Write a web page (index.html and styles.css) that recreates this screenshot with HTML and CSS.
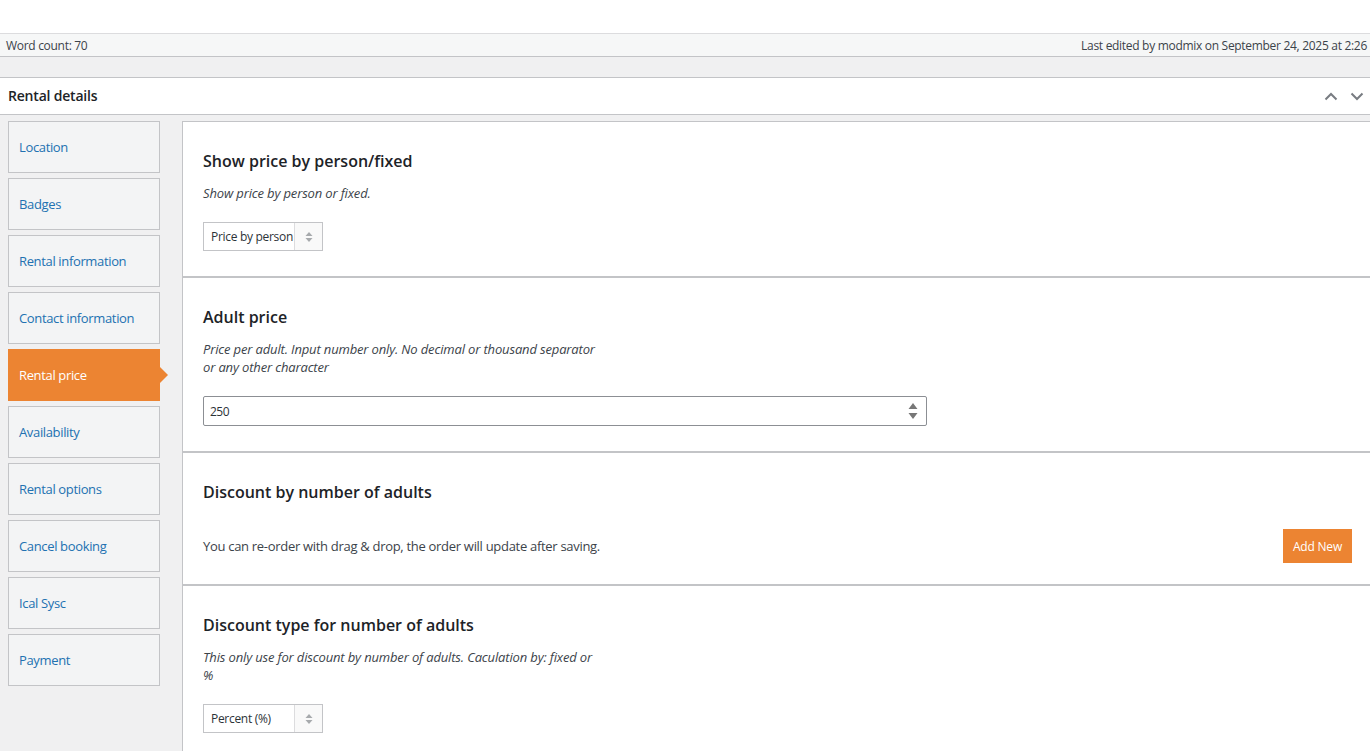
FILE: index.html
```html
<!DOCTYPE html>
<html lang="en">
<head>
    <meta charset="UTF-8">
    <meta name="viewport" content="width=device-width, initial-scale=1.0">
    <title>Rental details</title>
    <link rel="stylesheet" href="styles.css">
</head>
<body>
    <div class="editor-top"></div>
    <div class="status-bar">
        <span>Word count: 70</span>
        <span>Last edited by modmix on September 24, 2025 at 2:26</span>
    </div>
    <div class="spacer"></div>

    <div class="postbox">
        <div class="postbox-header">
            <h2>Rental details</h2>
            <div class="handle-actions">
                <svg width="14" height="9" viewBox="0 0 14 9"><path d="M1.5 7.5 L7 2 L12.5 7.5" fill="none" stroke="#787c82" stroke-width="2"/></svg>
                <svg width="14" height="9" viewBox="0 0 14 9"><path d="M1.5 1.5 L7 7 L12.5 1.5" fill="none" stroke="#787c82" stroke-width="2"/></svg>
            </div>
        </div>
        <div class="postbox-body">
            <ul class="tabs">
                <li class="tab">Location</li>
                <li class="tab">Badges</li>
                <li class="tab">Rental information</li>
                <li class="tab">Contact information</li>
                <li class="tab active">Rental price</li>
                <li class="tab">Availability</li>
                <li class="tab">Rental options</li>
                <li class="tab">Cancel booking</li>
                <li class="tab">Ical Sysc</li>
                <li class="tab">Payment</li>
            </ul>

            <div class="panel">
                <div class="field">
                    <h3>Show price by person/fixed</h3>
                    <p class="desc">Show price by person or fixed.</p>
                    <div class="select-box">
                        <select>
                            <option>Price by person</option>
                            <option>Fixed</option>
                        </select>
                        <span class="select-arrow">
                            <svg width="8" height="12" viewBox="0 0 8 12"><path d="M4 1 L7.5 5 H0.5 Z M4 11 L7.5 7 H0.5 Z" fill="#a7aaad"/></svg>
                        </span>
                    </div>
                </div>

                <div class="field">
                    <h3>Adult price</h3>
                    <p class="desc">Price per adult. Input number only. No decimal or thousand separator or any other character</p>
                    <div class="num-field">
                        <input type="text" value="250">
                        <svg width="10" height="18" viewBox="0 0 10 18"><path d="M5 1 L9.5 7 H0.5 Z M5 17 L9.5 11 H0.5 Z" fill="#777"/></svg>
                    </div>
                </div>

                <div class="field field-repeater">
                    <h3>Discount by number of adults</h3>
                    <div class="repeater-row">
                        <span>You can re-order with drag &amp; drop, the order will update after saving.</span>
                        <button class="btn-add">Add New</button>
                    </div>
                </div>

                <div class="field">
                    <h3>Discount type for number of adults</h3>
                    <p class="desc">This only use for discount by number of adults. Caculation by: fixed or %</p>
                    <div class="select-box">
                        <select>
                            <option>Percent (%)</option>
                            <option>Fixed</option>
                        </select>
                        <span class="select-arrow">
                            <svg width="8" height="12" viewBox="0 0 8 12"><path d="M4 1 L7.5 5 H0.5 Z M4 11 L7.5 7 H0.5 Z" fill="#a7aaad"/></svg>
                        </span>
                    </div>
                </div>
            </div>
        </div>
    </div>
</body>
</html>
```

FILE: styles.css
```css
body {
    font-family: "Open Sans", "Noto Sans", Arial, sans-serif;
    color: #3c434a;
    background-color: #f0f0f1;
    margin: 0;
    height: 751px;
    overflow: hidden;
}
.editor-top {
    height: 33px;
    background-color: #fff;
    border-bottom: 1px solid #dcdcde;
}
.status-bar {
    height: 22px;
    background-color: #f6f7f7;
    border-bottom: 1px solid #c3c4c7;
    display: flex;
    align-items: center;
    justify-content: space-between;
    padding: 0 3px 0 6px;
    font-size: 12px;
    letter-spacing: -0.3px;
    color: #3c434a;
    white-space: nowrap;
}
.spacer {
    height: 20px;
    background-color: #f0f0f1;
    border-bottom: 1px solid #c3c4c7;
}
.postbox-header {
    height: 36px;
    background-color: #fff;
    border-bottom: 1px solid #c3c4c7;
    display: flex;
    align-items: center;
    justify-content: space-between;
    padding: 0 6px 0 8px;
}
.postbox-header h2 {
    margin: 0 0 2px;
    font-size: 14px;
    font-weight: 600;
    letter-spacing: -0.2px;
    color: #1d2327;
}
.handle-actions {
    display: flex;
    gap: 12px;
    align-items: center;
}
.postbox-body {
    display: flex;
    align-items: flex-start;
    padding-top: 6px;
    background-color: #f0f0f1;
}
.tabs {
    list-style: none;
    margin: 0;
    padding: 0 0 0 8px;
    width: 152px;
    margin-right: 22px;
    display: flex;
    flex-direction: column;
    gap: 5px;
}
.tab {
    height: 50px;
    display: flex;
    align-items: center;
    padding-left: 10px;
    background-color: #f3f4f5;
    border: 1px solid #c3c4c7;
    font-size: 13px;
    letter-spacing: -0.35px;
    color: #2271b1;
    position: relative;
}
.tab.active {
    background-color: #ec8432;
    border-color: #ec8432;
    color: #fff;
}
/* стрелка у активной вкладки */
.tab.active::after {
    content: "";
    position: absolute;
    right: -9px;
    top: 17px;
    border-left: 8px solid #ec8432;
    border-top: 8px solid transparent;
    border-bottom: 8px solid transparent;
}
.panel {
    flex: 1;
    background-color: #fff;
    border-left: 1px solid #c3c4c7;
    border-top: 1px solid #c3c4c7;
    height: 640px;
}
.field {
    padding: 28px 18px 25px 20px;
    border-bottom: 2px solid #c3c4c7;
}
.field-repeater {
    padding-bottom: 21px;
}
.field h3 {
    margin: 0;
    font-size: 16px;
    line-height: 22px;
    font-weight: 600;
    color: #1d2327;
}
.desc {
    margin: 12px 0 20px;
    max-width: 392px;
    font-size: 13px;
    line-height: 18px;
    font-style: italic;
    letter-spacing: -0.15px;
    color: #3c434a;
}
.select-box {
    display: flex;
    width: 118px;
    height: 27px;
    border: 1px solid #c3c4c7;
}
.select-box select {
    flex: 1;
    min-width: 0;
    appearance: none;
    border: none;
    background: #fff;
    font-family: inherit;
    font-size: 12px;
    letter-spacing: -0.3px;
    color: #2c3338;
    padding: 0 0 0 7px;
    outline: none;
}
.select-arrow {
    width: 27px;
    border-left: 1px solid #dcdcde;
    background-color: #f9f9f9;
    display: flex;
    align-items: center;
    justify-content: center;
}
.num-field {
    width: 724px;
    height: 30px;
    margin-top: 1px;
    box-sizing: border-box;
    border: 1px solid #8c8f94;
    border-radius: 2px;
    display: flex;
    align-items: center;
    padding-right: 8px;
}
.num-field input {
    flex: 1;
    border: none;
    outline: none;
    font-family: inherit;
    font-size: 12px;
    letter-spacing: -0.5px;
    color: #2c3338;
    padding: 0 6px;
}
.repeater-row {
    display: flex;
    align-items: center;
    justify-content: space-between;
    margin-top: 26px;
    font-size: 13px;
    letter-spacing: -0.3px;
    color: #3c434a;
}
.btn-add {
    height: 34px;
    padding: 0 10px;
    background-color: #ec8432;
    color: #fff;
    border: none;
    font-family: inherit;
    font-size: 12px;
    letter-spacing: -0.2px;
    cursor: pointer;
}
```
